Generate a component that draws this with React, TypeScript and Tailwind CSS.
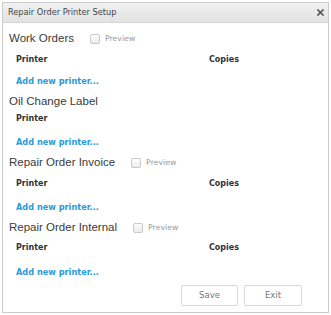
import React from "react";

const small = { fontFamily: '"DejaVu Sans", Verdana, sans-serif' };
const head = { fontFamily: '"Liberation Sans", Arial, sans-serif' };

function Heading({ title, preview }: { title: string; preview?: boolean }) {
  return (
    <div className="flex items-center h-[20px] pl-[6px]">
      <span className="text-[11.5px] text-[#3a3a3a] leading-none" style={head}>
        {title}
      </span>
      {preview && (
        <>
          <span className="ml-[16px] w-[10px] h-[10px] rounded-[2px] border border-[#c9c9c9] bg-gradient-to-b from-[#fdfdfd] to-[#ececec]" />
          <span className="ml-[5px] text-[7.8px] text-[#9a9a9a] leading-none" style={small}>
            Preview
          </span>
        </>
      )}
    </div>
  );
}

function TableHead({ copies, h }: { copies: boolean; h: string }) {
  return (
    <div className={`flex items-center pl-[13px] ${h}`} style={small}>
      <span className="w-[193px] text-[8px] font-bold text-[#333] leading-none">Printer</span>
      {copies && <span className="text-[8px] font-bold text-[#333] leading-none">Copies</span>}
    </div>
  );
}

function AddRow({ mt }: { mt: string }) {
  return (
    <div className={`flex items-center h-[22px] pl-[13px] ${mt}`} style={small}>
      <span className="text-[8.2px] font-bold text-[#2b9ad9] leading-none">Add new printer...</span>
    </div>
  );
}

export default function App() {
  return (
    <div className="w-[331px] h-[315px] bg-white p-[2px]">
      <div className="w-[327px] h-[311px] border border-[#cbcbcb] flex flex-col bg-white">
        <div
          className="h-[20px] flex items-center justify-between pl-[5px] pr-[3px] border-b border-[#d6d6d6] bg-gradient-to-b from-[#f1f1f1] to-[#e2e2e2]"
          style={small}
        >
          <span className="text-[8.2px] text-[#444] leading-none">Repair Order Printer Setup</span>
          <svg width="7" height="7" viewBox="0 0 7 7" className="mr-[1px]">
            <path d="M1 1L6 6M6 1L1 6" stroke="#555" strokeWidth="1.6" strokeLinecap="square" />
          </svg>
        </div>
        <div className="flex flex-col pt-[6px]">
          <Heading title="Work Orders" preview />
          <TableHead copies h="h-[21px]" />
          <AddRow mt="" />

          <Heading title="Oil Change Label" />
          <TableHead copies={false} h="h-[14px]" />
          <AddRow mt="mt-[5px]" />

          <Heading title="Repair Order Invoice" preview />
          <TableHead copies h="h-[22px]" />
          <AddRow mt="mt-[1px]" />

          <Heading title="Repair Order Internal" preview />
          <TableHead copies h="h-[20px]" />
          <AddRow mt="mt-[3px]" />

          <div className="flex justify-end gap-[6px] pr-[26px] mt-[2px]">
            <button
              className="w-[57px] h-[21px] border border-[#d9d9d9] rounded-[2px] bg-white text-[8.5px] text-[#777]"
              style={small}
            >
              Save
            </button>
            <button
              className="w-[58px] h-[21px] border border-[#d9d9d9] rounded-[2px] bg-white text-[8.5px] text-[#777]"
              style={small}
            >
              Exit
            </button>
          </div>
        </div>
      </div>
    </div>
  );
}
